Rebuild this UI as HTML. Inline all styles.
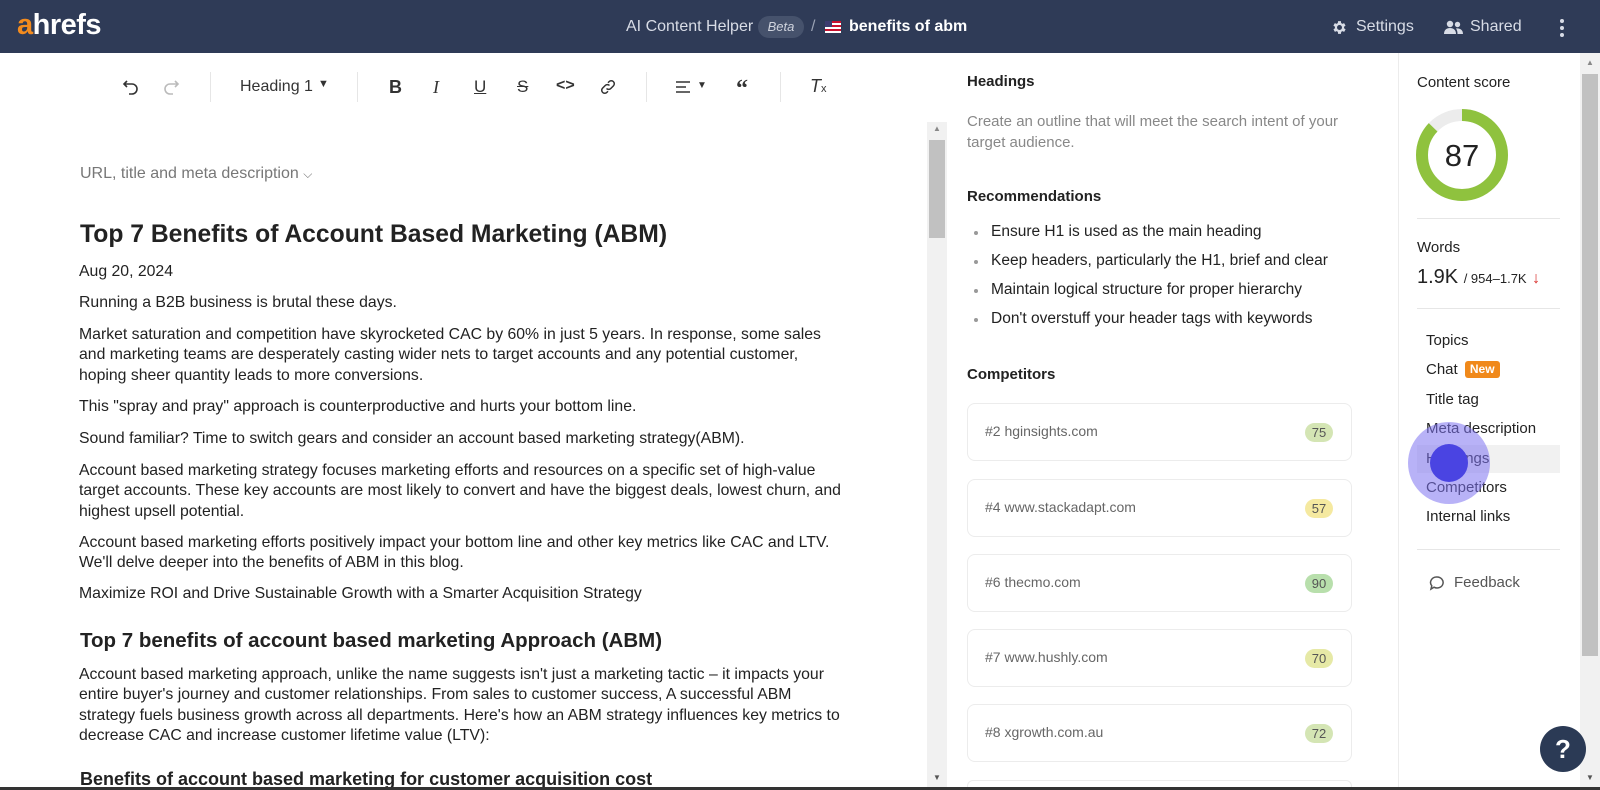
<!DOCTYPE html>
<html><head><meta charset="utf-8">
<style>
*{margin:0;padding:0;box-sizing:border-box}
html,body{width:1600px;height:790px;overflow:hidden}
body{background:#fff;font-family:"Liberation Sans",Arial,sans-serif;color:#222;position:relative}
.a{position:absolute;white-space:nowrap}
.hdr{position:absolute;left:0;top:0;width:1600px;height:53px;background:#2f3b57}
.hdr .a{color:#fff}
.tb{color:#333;font-size:16px}
.div{position:absolute;width:1px;background:#e6e6e6}
.ed p{position:absolute;left:79px;font-size:15.8px;line-height:20.4px;color:#222;white-space:nowrap}
.card{position:absolute;left:967px;width:385px;height:58px;border:1px solid #ececec;border-radius:8px}
.card span.t{position:absolute;left:17px;top:19px;font-size:14px;color:#666}
.card span.b{position:absolute;right:18px;top:19px;width:28px;height:19px;border-radius:10px;font-size:13px;color:#555;text-align:center;line-height:19px}
.menu{position:absolute;left:1426px;font-size:15px;color:#222}
.rec{position:absolute;left:991px;font-size:15.5px;color:#222}
.dot{position:absolute;left:974px;width:4px;height:4px;border-radius:50%;background:#999}
</style></head><body>
<div class="hdr">
  <div class="a" style="left:17px;top:9px;font-size:29px;font-weight:bold;letter-spacing:-0.5px"><span style="color:#f38b1e">a</span>hrefs</div>
  <div class="a" style="left:626px;top:18px;font-size:16px;color:#d8dce6">AI Content Helper</div>
  <div class="a" style="left:758px;top:16px;width:46px;height:22px;border-radius:11px;background:#46526c;color:#d0d4de;font-size:13px;font-style:italic;text-align:center;line-height:22px">Beta</div>
  <div class="a" style="left:811px;top:18px;font-size:16px;color:#9aa2b4">/</div>
  <svg class="a" style="left:825px;top:21px" width="16" height="12" viewBox="0 0 16 12"><rect width="16" height="12" fill="#fff"/><rect y="0" width="16" height="2" fill="#c8102e"/><rect y="4" width="16" height="2" fill="#c8102e"/><rect y="8" width="16" height="2" fill="#c8102e"/><rect width="7" height="6" fill="#3c3b6e"/></svg>
  <div class="a" style="left:849px;top:18px;font-size:16px;font-weight:bold">benefits of abm</div>
  <svg class="a" style="left:1331px;top:19px" width="17" height="17" viewBox="0 0 24 24"><path fill="#d8dce6" d="M19.4 13a7.5 7.5 0 0 0 0-2l2.1-1.6-2-3.5-2.5 1a7 7 0 0 0-1.7-1L15 3h-4l-.4 2.9a7 7 0 0 0-1.7 1l-2.5-1-2 3.5L6.6 11a7.5 7.5 0 0 0 0 2l-2.1 1.6 2 3.5 2.5-1a7 7 0 0 0 1.7 1L11 21h4l.4-2.9a7 7 0 0 0 1.7-1l2.5 1 2-3.5zM13 15.5a3.5 3.5 0 1 1 0-7 3.5 3.5 0 0 1 0 7z" transform="translate(-1 0)"/></svg>
  <div class="a" style="left:1356px;top:18px;font-size:16px;color:#d8dce6">Settings</div>
  <svg class="a" style="left:1444px;top:20px" width="19" height="15" viewBox="0 0 19 15"><circle cx="6" cy="4" r="3.2" fill="#d8dce6"/><circle cx="13.5" cy="4.5" r="2.7" fill="#d8dce6"/><path d="M0 14c0-4 2.5-6 6-6s6 2 6 6z" fill="#d8dce6"/><path d="M12 8.5c3.5-.5 7 1 7 5.5h-5.5c0-2.5-.5-4-1.5-5.5z" fill="#d8dce6"/></svg>
  <div class="a" style="left:1470px;top:18px;font-size:16px;color:#d8dce6">Shared</div>
  <svg class="a" style="left:1559px;top:18px" width="6" height="20"><circle cx="3" cy="3" r="2" fill="#d8dce6"/><circle cx="3" cy="10" r="2" fill="#d8dce6"/><circle cx="3" cy="17" r="2" fill="#d8dce6"/></svg>
</div>

<!-- toolbar -->
<svg class="a" style="left:121px;top:78px" width="18" height="18" viewBox="0 0 18 18"><path d="M5 4L2 7l3 3M2 7h8a5 5 0 0 1 0 10H7" fill="none" stroke="#333" stroke-width="1.6" transform="translate(1 -1)"/></svg>
<svg class="a" style="left:163px;top:78px" width="18" height="18" viewBox="0 0 18 18"><path d="M13 4l3 3-3 3M16 7H8a5 5 0 0 0 0 10h3" fill="none" stroke="#bbb" stroke-width="1.6" transform="translate(-1 -1)"/></svg>
<div class="div" style="left:210px;top:72px;height:30px"></div>
<div class="a tb" style="left:240px;top:78px;font-size:16px">Heading 1</div>
<div class="a" style="left:318px;top:78px;font-size:11px;color:#333">▼</div>
<div class="div" style="left:357px;top:72px;height:30px"></div>
<div class="a tb" style="left:389px;top:77px;font-weight:bold;font-size:18px">B</div>
<div class="a tb" style="left:433px;top:77px;font-style:italic;font-size:18px;font-family:'Liberation Serif',serif">I</div>
<div class="a tb" style="left:474px;top:77px;text-decoration:underline;font-size:17px">U</div>
<div class="a tb" style="left:517px;top:77px;text-decoration:line-through;font-size:17px">S</div>
<div class="a tb" style="left:556px;top:77px;font-size:16px;font-weight:bold">&lt;&gt;</div>
<svg class="a" style="left:599px;top:78px" width="18" height="18" viewBox="0 0 24 24"><path d="M10 14a4 4 0 0 0 5.7 0l3.5-3.5a4 4 0 0 0-5.7-5.7L12 6.3M14 10a4 4 0 0 0-5.7 0l-3.5 3.5a4 4 0 0 0 5.7 5.7l1.5-1.5" fill="none" stroke="#333" stroke-width="2"/></svg>
<div class="div" style="left:646px;top:72px;height:30px"></div>
<svg class="a" style="left:676px;top:81px" width="15" height="12"><path d="M0 1h14M0 6h10M0 11h14" stroke="#333" stroke-width="1.6"/></svg>
<div class="a" style="left:697px;top:80px;font-size:10px;color:#333">▼</div>
<div class="a tb" style="left:736px;top:76px;font-size:24px;font-weight:bold;font-family:'Liberation Serif',serif">“</div>
<div class="div" style="left:780px;top:72px;height:30px"></div>
<div class="a tb" style="left:810px;top:76px;font-style:italic;font-size:18px">T<span style="font-size:11px;font-style:normal">x</span></div>

<!-- editor -->
<div class="ed">
<div class="a" style="left:80px;top:165px;font-size:16px;color:#777">URL, title and meta description <span style="font-size:12px">⌵</span></div>
<div class="a" style="left:80px;top:221px;font-size:24.7px;font-weight:bold;color:#222">Top 7 Benefits of Account Based Marketing (ABM)</div>
<p style="top:262px">Aug 20, 2024</p>
<p style="top:293px">Running a B2B business is brutal these days.</p>
<p style="top:325px">Market saturation and competition have skyrocketed CAC by 60% in just 5 years. In response, some sales<br>and marketing teams are desperately casting wider nets to target accounts and any potential customer,<br>hoping sheer quantity leads to more conversions.</p>
<p style="top:397px">This "spray and pray" approach is counterproductive and hurts your bottom line.</p>
<p style="top:429px">Sound familiar? Time to switch gears and consider an account based marketing strategy(ABM).</p>
<p style="top:461px">Account based marketing strategy focuses marketing efforts and resources on a specific set of high-value<br>target accounts. These key accounts are most likely to convert and have the biggest deals, lowest churn, and<br>highest upsell potential.</p>
<p style="top:533px">Account based marketing efforts positively impact your bottom line and other key metrics like CAC and LTV.<br>We'll delve deeper into the benefits of ABM in this blog.</p>
<p style="top:584px">Maximize ROI and Drive Sustainable Growth with a Smarter Acquisition Strategy</p>
<div class="a" style="left:80px;top:629px;font-size:20.5px;font-weight:bold">Top 7 benefits of account based marketing Approach (ABM)</div>
<p style="top:665px">Account based marketing approach, unlike the name suggests isn't just a marketing tactic – it impacts your<br>entire buyer's journey and customer relationships. From sales to customer success, A successful ABM<br>strategy fuels business growth across all departments. Here's how an ABM strategy influences key metrics to<br>decrease CAC and increase customer lifetime value (LTV):</p>
<div class="a" style="left:80px;top:769px;font-size:18px;font-weight:bold">Benefits of account based marketing for customer acquisition cost</div>
</div>
<!-- editor scrollbar -->
<div class="a" style="left:927px;top:122px;width:20px;height:668px;background:#f1f1f1"></div>
<div class="a" style="left:929px;top:140px;width:16px;height:98px;background:#c1c1c1"></div>
<div class="a" style="left:933px;top:124px;font-size:8px;color:#888">▲</div>
<div class="a" style="left:933px;top:773px;font-size:8px;color:#555">▼</div>

<!-- middle panel -->
<div class="a" style="left:967px;top:73px;font-size:15px;font-weight:bold">Headings</div>
<div class="a" style="left:967px;top:111px;font-size:15px;color:#888;line-height:21px">Create an outline that will meet the search intent of your<br>target audience.</div>
<div class="a" style="left:967px;top:188px;font-size:15px;font-weight:bold">Recommendations</div>
<div class="dot" style="top:231px"></div><div class="rec" style="top:223px">Ensure H1 is used as the main heading</div>
<div class="dot" style="top:260px"></div><div class="rec" style="top:252px">Keep headers, particularly the H1, brief and clear</div>
<div class="dot" style="top:289px"></div><div class="rec" style="top:281px">Maintain logical structure for proper hierarchy</div>
<div class="dot" style="top:318px"></div><div class="rec" style="top:310px">Don't overstuff your header tags with keywords</div>
<div class="a" style="left:967px;top:366px;font-size:15px;font-weight:bold">Competitors</div>
<div class="card" style="top:403px"><span class="t">#2 hginsights.com</span><span class="b" style="background:#d4e5b4">75</span></div>
<div class="card" style="top:479px"><span class="t">#4 www.stackadapt.com</span><span class="b" style="background:#f5e9a0">57</span></div>
<div class="card" style="top:554px"><span class="t">#6 thecmo.com</span><span class="b" style="background:#b8dfac">90</span></div>
<div class="card" style="top:629px"><span class="t">#7 www.hushly.com</span><span class="b" style="background:#e6e9a6">70</span></div>
<div class="card" style="top:704px"><span class="t">#8 xgrowth.com.au</span><span class="b" style="background:#d4e5b4">72</span></div>
<div class="card" style="top:780px;height:12px"></div>
<div class="div" style="left:1398px;top:53px;height:737px;background:#ececec"></div>

<!-- right panel -->
<div class="a" style="left:1417px;top:74px;font-size:15px">Content score</div>
<svg class="a" style="left:1414px;top:107px" width="96" height="96" viewBox="0 0 96 96">
<circle cx="48" cy="48" r="40" fill="none" stroke="#ececec" stroke-width="12"/>
<circle cx="48" cy="48" r="40" fill="none" stroke="#8fc23e" stroke-width="12" stroke-dasharray="218.7 251.3" transform="rotate(-90 48 48)"/>
<text x="48" y="59" text-anchor="middle" font-size="31" font-family="Liberation Sans" fill="#222">87</text></svg>
<div class="div" style="left:1417px;top:218px;width:143px;height:1px"></div>
<div class="a" style="left:1417px;top:239px;font-size:15px">Words</div>
<div class="a" style="left:1417px;top:266px;font-size:20px">1.9K <span style="font-size:13px">/ 954–1.7K</span> <span style="color:#d9302c;font-size:16px">↓</span></div>
<div class="div" style="left:1417px;top:308px;width:143px;height:1px"></div>
<div class="a" style="left:1417px;top:445px;width:143px;height:28px;background:#f1f1f1"></div>
<div class="menu" style="top:332px">Topics</div>
<div class="menu" style="top:361px">Chat <span style="display:inline-block;background:#f0891b;color:#fff;font-size:12px;font-weight:bold;padding:1px 5px;border-radius:3px;margin-left:3px;line-height:15px;vertical-align:1px">New</span></div>
<div class="menu" style="top:391px">Title tag</div>
<div class="menu" style="top:420px">Meta description</div>
<div class="menu" style="top:450px">Headings</div>
<div class="menu" style="top:479px">Competitors</div>
<div class="menu" style="top:508px">Internal links</div>
<div class="div" style="left:1417px;top:549px;width:143px;height:1px"></div>
<svg class="a" style="left:1429px;top:575px" width="16" height="16" viewBox="0 0 16 16"><path d="M8 2a6 5.5 0 1 1-3 10.2L2 14l.8-3.2A6 5.5 0 0 1 8 2z" fill="none" stroke="#555" stroke-width="1.5"/></svg>
<div class="a" style="left:1454px;top:574px;font-size:15px;color:#555">Feedback</div>
<!-- click indicator -->
<div class="a" style="left:1408px;top:422px;width:82px;height:82px;border-radius:50%;background:rgba(125,115,240,.55)"></div>
<div class="a" style="left:1430px;top:444px;width:38px;height:38px;border-radius:50%;background:#4a44e2"></div>

<!-- right scrollbar -->
<div class="a" style="left:1580px;top:53px;width:20px;height:737px;background:#f1f1f1"></div>
<div class="a" style="left:1582px;top:74px;width:16px;height:582px;background:#c1c1c1"></div>
<div class="a" style="left:1586px;top:58px;font-size:8px;color:#888">▲</div>
<div class="a" style="left:1586px;top:773px;font-size:8px;color:#555">▼</div>
<!-- help -->
<div class="a" style="left:1540px;top:726px;width:46px;height:46px;border-radius:50%;background:#2b3a55;color:#fff;font-size:26px;font-weight:bold;text-align:center;line-height:46px">?</div>
<div class="a" style="left:0;top:787px;width:1600px;height:3px;background:#333"></div>
</body></html>
